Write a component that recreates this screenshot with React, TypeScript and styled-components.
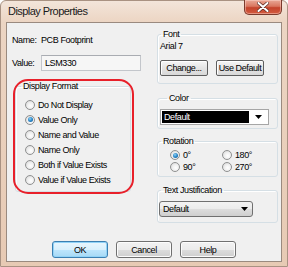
import React from "react";
import styled, { createGlobalStyle, css } from "styled-components";

const Global = createGlobalStyle`
  html, body { margin: 0; padding: 0; background: #ffffff; }
  #root { width: 288px; height: 267px; }
  * { box-sizing: border-box; }
`;

const uiFont = css`
  font-family: "Liberation Sans", Arial, sans-serif;
  font-size: 9px;
  letter-spacing: -0.4px;
  color: #000;
`;

const Window = styled.div`
  width: 288px;
  height: 267px;
  display: flex;
  flex-direction: column;
  padding: 0 5px 4px 5px;
  border: 1px solid #a99282;
  border-radius: 6px 6px 0 0;
  background: linear-gradient(#f3e5da 0px, #ecd5c3 21px, #e7cab4 100%);
`;

const TitleBar = styled.div`
  height: 21px;
  margin: 0 -5px;
  padding: 0 5px 0 7px;
  display: flex;
  align-items: flex-start;
  justify-content: space-between;
`;

const Title = styled.div`
  font-family: "Liberation Sans", Arial, sans-serif;
  font-size: 11px;
  letter-spacing: -0.55px;
  color: #1a1a1a;
  line-height: 21px;
`;

const CloseButton = styled.div`
  width: 38px;
  height: 15px;
  margin-top: -1px;
  border: 1px solid #7a3a2c;
  border-top: none;
  border-radius: 0 0 5px 5px;
  background: linear-gradient(#e9a896 0%, #d9765f 45%, #c4432b 55%, #d35b3f 100%);
  box-shadow: inset 0 0 0 1px rgba(255, 220, 210, 0.45);
  display: flex;
  align-items: center;
  justify-content: center;
`;

const Client = styled.div`
  flex: 1;
  display: flex;
  flex-direction: column;
  border: 1px solid #9a8a7f;
  background: #f0f0f0;
`;

const Main = styled.div`
  display: grid;
  grid-template-columns: 144px 121px;
  column-gap: 6px;
`;

const LeftCol = styled.div`
  display: flex;
  flex-direction: column;
`;

const RightCol = styled.div`
  display: flex;
  flex-direction: column;
`;

const FieldRow = styled.div<{ $top: number }>`
  ${uiFont};
  display: flex;
  align-items: center;
  margin-top: ${(p) => p.$top}px;
  padding-left: 5px;
  line-height: 13px;
`;

const Label = styled.span`
  width: 29px;
  flex: none;
`;

const ValueBox = styled.div`
  ${uiFont};
  width: 100px;
  height: 16px;
  line-height: 14px;
  padding-left: 3px;
  border: 1px solid #c3c6cb;
  border-top-color: #a9acb2;
  background: #f6f6f6;
`;

const Marked = styled.div`
  position: relative;
  margin: 9px 0 0 8px;
  width: 116px;
`;

const RedRing = styled.div`
  position: absolute;
  top: -1px;
  left: -2px;
  right: -3px;
  bottom: -2px;
  border: 2px solid #e8202a;
  border-radius: 15px;
  pointer-events: none;
`;

const Group = styled.fieldset<{
  $pt: number;
  $pb: number;
  $pl: number;
  $top?: number;
}>`
  margin: ${(p) => p.$top ?? 0}px 0 0 0;
  min-width: 0;
  padding: ${(p) => p.$pt}px 2px ${(p) => p.$pb}px ${(p) => p.$pl}px;
  border: 1px solid #d5dfe5;
  border-radius: 3px;
  box-shadow: inset 1px 1px 0 #ffffff;
`;

const Legend = styled.legend<{ $ml: number }>`
  ${uiFont};
  line-height: 12px;
  padding: 0 2px;
  margin-left: ${(p) => p.$ml}px;
`;

const RadioList = styled.div`
  display: flex;
  flex-direction: column;
`;

const RadioItem = styled.div<{ $h: number }>`
  ${uiFont};
  display: flex;
  align-items: center;
  gap: 3px;
  height: ${(p) => p.$h}px;
`;

const RadioCircle = styled.span<{ $checked?: boolean }>`
  width: 10px;
  height: 10px;
  flex: none;
  border-radius: 50%;
  border: 1px solid #8f9090;
  background: radial-gradient(circle at 60% 60%, #ffffff 0%, #f0f0f0 45%, #cfcfcf 100%);
  display: flex;
  align-items: center;
  justify-content: center;
  &::after {
    content: "";
    display: ${(p) => (p.$checked ? "block" : "none")};
    width: 5px;
    height: 5px;
    border-radius: 50%;
    background: radial-gradient(circle at 40% 35%, #8fd1f5 0%, #2a87c8 50%, #0d4f8c 100%);
  }
`;

const RotationGrid = styled.div`
  display: grid;
  grid-template-columns: 52px 52px;
`;

const PlainText = styled.div`
  ${uiFont};
  line-height: 12px;
`;

const SmallButtons = styled.div`
  display: flex;
  gap: 8px;
  margin-top: 8px;
`;

const ClassicButton = styled.div`
  ${uiFont};
  width: 48px;
  height: 16px;
  display: flex;
  align-items: center;
  justify-content: center;
  border: 1px solid #5e5e5e;
  border-radius: 2px;
  background: linear-gradient(#f6f6f6, #e4e4e4 50%, #d8d8d8);
  box-shadow: inset 1px 1px 0 #ffffff;
`;

const ColorSelect = styled.div`
  width: 109px;
  height: 16px;
  display: flex;
  align-items: stretch;
  padding: 1px;
  border: 1px solid #a6a6a6;
  background: #ffffff;
`;

const Highlight = styled.div`
  ${uiFont};
  color: #ffffff;
  width: 87px;
  background: #000000;
  line-height: 12px;
  padding-left: 2px;
`;

const ArrowCell = styled.div`
  flex: 1;
  display: flex;
  align-items: center;
  justify-content: center;
`;

const AeroSelect = styled.div`
  ${uiFont};
  width: 94px;
  height: 16px;
  display: flex;
  align-items: center;
  justify-content: space-between;
  padding: 0 4px 0 3px;
  border: 1px solid #707070;
  border-radius: 3px;
  background: linear-gradient(#f3f3f3 0%, #ebebeb 50%, #dddddd 51%, #cfcfcf 100%);
`;

const Footer = styled.div`
  margin-top: auto;
  padding-bottom: 3px;
  display: flex;
  justify-content: center;
  gap: 8px;
`;

const DialogButton = styled.div<{ $default?: boolean }>`
  ${uiFont};
  width: 56px;
  height: 17px;
  display: flex;
  align-items: center;
  justify-content: center;
  border-radius: 3px;
  border: 1px solid ${(p) => (p.$default ? "#3c7fb1" : "#707070")};
  background: ${(p) =>
    p.$default
      ? "linear-gradient(#eaf6fd 0%, #d9f0fc 50%, #bee6fd 51%, #a7d9f5 100%)"
      : "linear-gradient(#f2f2f2 0%, #ebebeb 50%, #dddddd 51%, #cfcfcf 100%)"};
  box-shadow: inset 0 0 0 1px ${(p) => (p.$default ? "#92d3f7" : "#fcfcfc")};
`;

const Arrow = () => (
  <svg width="7" height="4" viewBox="0 0 7 4">
    <path d="M0 0 H7 L3.5 4 Z" fill="#000" />
  </svg>
);

const CloseX = () => (
  <svg width="12" height="10" viewBox="0 0 12 10">
    <path
      d="M1.5 1 L10.5 9 M10.5 1 L1.5 9"
      stroke="#5a2a22"
      strokeWidth="3.4"
      strokeLinecap="round"
    />
    <path
      d="M1.5 1 L10.5 9 M10.5 1 L1.5 9"
      stroke="#ffffff"
      strokeWidth="2"
      strokeLinecap="round"
    />
  </svg>
);

const formats = [
  "Do Not Display",
  "Value Only",
  "Name and Value",
  "Name Only",
  "Both if Value Exists",
  "Value if Value Exists",
];

export default function App() {
  return (
    <>
      <Global />
      <Window>
        <TitleBar>
          <Title>Display Properties</Title>
          <CloseButton>
            <CloseX />
          </CloseButton>
        </TitleBar>
        <Client>
          <Main>
            <LeftCol>
              <FieldRow $top={11}>
                <Label>Name:</Label>
                <span>PCB Footprint</span>
              </FieldRow>
              <FieldRow $top={8}>
                <Label>Value:</Label>
                <ValueBox>LSM330</ValueBox>
              </FieldRow>
              <Marked>
                <Group $pt={5} $pb={4} $pl={9}>
                  <Legend $ml={-4}>Display Format</Legend>
                  <RadioList>
                    {formats.map((f, i) => (
                      <RadioItem key={f} $h={15}>
                        <RadioCircle $checked={i === 1} />
                        {f}
                      </RadioItem>
                    ))}
                  </RadioList>
                </Group>
                <RedRing />
              </Marked>
            </LeftCol>
            <RightCol>
              <Group $top={5} $pt={0} $pb={7} $pl={2}>
                <Legend $ml={1}>Font</Legend>
                <PlainText>Arial 7</PlainText>
                <SmallButtons>
                  <ClassicButton>Change...</ClassicButton>
                  <ClassicButton>Use Default</ClassicButton>
                </SmallButtons>
              </Group>
              <Group $top={8} $pt={5} $pb={3} $pl={2}>
                <Legend $ml={7}>Color</Legend>
                <ColorSelect>
                  <Highlight>Default</Highlight>
                  <ArrowCell>
                    <Arrow />
                  </ArrowCell>
                </ColorSelect>
              </Group>
              <Group $top={6} $pt={2} $pb={3} $pl={12}>
                <Legend $ml={-9}>Rotation</Legend>
                <RotationGrid>
                  <RadioItem $h={12}>
                    <RadioCircle $checked />
                    0°
                  </RadioItem>
                  <RadioItem $h={12}>
                    <RadioCircle />
                    180°
                  </RadioItem>
                  <RadioItem $h={12}>
                    <RadioCircle />
                    90°
                  </RadioItem>
                  <RadioItem $h={12}>
                    <RadioCircle />
                    270°
                  </RadioItem>
                </RotationGrid>
              </Group>
              <Group $top={7} $pt={5} $pb={5} $pl={1}>
                <Legend $ml={2}>Text Justification</Legend>
                <AeroSelect>
                  Default
                  <Arrow />
                </AeroSelect>
              </Group>
            </RightCol>
          </Main>
          <Footer>
            <DialogButton $default>OK</DialogButton>
            <DialogButton>Cancel</DialogButton>
            <DialogButton>Help</DialogButton>
          </Footer>
        </Client>
      </Window>
    </>
  );
}
